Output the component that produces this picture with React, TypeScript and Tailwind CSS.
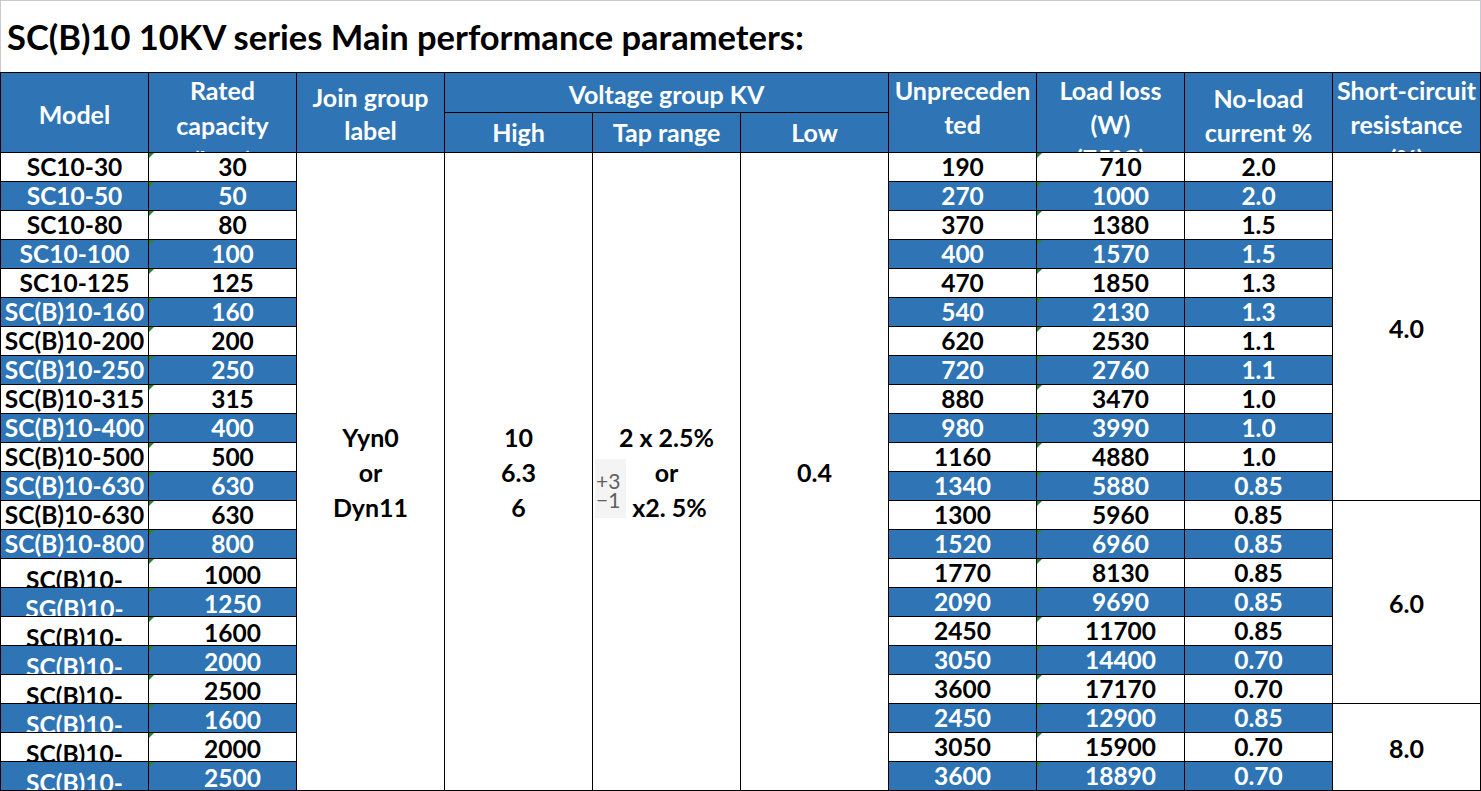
const rows: string[][] = [
  ["SC10-30", "30", "190", "710", "2.0"],
  ["SC10-50", "50", "270", "1000", "2.0"],
  ["SC10-80", "80", "370", "1380", "1.5"],
  ["SC10-100", "100", "400", "1570", "1.5"],
  ["SC10-125", "125", "470", "1850", "1.3"],
  ["SC(B)10-160", "160", "540", "2130", "1.3"],
  ["SC(B)10-200", "200", "620", "2530", "1.1"],
  ["SC(B)10-250", "250", "720", "2760", "1.1"],
  ["SC(B)10-315", "315", "880", "3470", "1.0"],
  ["SC(B)10-400", "400", "980", "3990", "1.0"],
  ["SC(B)10-500", "500", "1160", "4880", "1.0"],
  ["SC(B)10-630", "630", "1340", "5880", "0.85"],
  ["SC(B)10-630", "630", "1300", "5960", "0.85"],
  ["SC(B)10-800", "800", "1520", "6960", "0.85"],
  ["SC(B)10-", "1000", "1770", "8130", "0.85"],
  ["SG(B)10-", "1250", "2090", "9690", "0.85"],
  ["SC(B)10-", "1600", "2450", "11700", "0.85"],
  ["SC(B)10-", "2000", "3050", "14400", "0.70"],
  ["SC(B)10-", "2500", "3600", "17170", "0.70"],
  ["SC(B)10-", "1600", "2450", "12900", "0.85"],
  ["SC(B)10-", "2000", "3050", "15900", "0.70"],
  ["SC(B)10-", "2500", "3600", "18890", "0.70"],
];

const hdr =
  "bg-[#2f75b5] text-white text-[25px] flex flex-col items-center overflow-hidden whitespace-nowrap";
const cell =
  "relative flex items-center justify-center overflow-hidden whitespace-nowrap text-[24.5px] leading-[28px]";

// little green "number stored as text" marker, like Excel shows
function Flag() {
  return (
    <span className="absolute left-0 top-0 h-0 w-0 border-t-[5px] border-r-[5px] border-t-[#1f8a2a] border-r-transparent" />
  );
}

function Merged({ lines, extra = "" }: { lines: string[]; extra?: string }) {
  return (
    <div
      className={`bg-white text-black text-[25px] leading-[35px] flex flex-col items-center justify-center ${extra}`}
    >
      {lines.map((l, i) => (
        <span key={i}>{l}</span>
      ))}
    </div>
  );
}

export default function App() {
  return (
    <div className="w-[1481px] bg-white font-['Lato',sans-serif] font-bold text-black">
      {/* Title */}
      <div className="h-[72px] border-l border-t border-r border-[#c9c9d6] pl-[6px] pt-[18px] text-[34.5px] leading-[36px]">
        SC(B)10 10KV series Main performance parameters:
      </div>

      <div className="grid grid-cols-[repeat(10,147px)] grid-rows-[39px_39px_repeat(22,28px)] gap-px bg-black p-px">
        {/* Header row 1 */}
        <div className={`${hdr} row-span-2 justify-center pt-[4px]`}>Model</div>
        <div className={`${hdr} row-span-2 justify-start leading-[35px]`}>
          <span>Rated</span>
          <span>capacity</span>
          <span>(kVA)</span>
        </div>
        <div className={`${hdr} row-span-2 justify-center pt-[3px] leading-[33px]`}>
          <span>Join group</span>
          <span>label</span>
        </div>
        <div className={`${hdr} col-span-3 justify-center pt-[4px]`}>Voltage group KV</div>
        <div className={`${hdr} row-span-2 justify-start leading-[34px]`}>
          <span>Unpreceden</span>
          <span>ted</span>
        </div>
        <div className={`${hdr} row-span-2 justify-start leading-[34px]`}>
          <span>Load loss</span>
          <span>(W)</span>
          <span>(75°C)</span>
        </div>
        <div className={`${hdr} row-span-2 justify-center pt-[4px] leading-[34px]`}>
          <span>No-load</span>
          <span>current %</span>
        </div>
        <div className={`${hdr} row-span-2 justify-start leading-[34px]`}>
          <span>Short-circuit</span>
          <span>resistance</span>
          <span>(%)</span>
        </div>
        {/* Header row 2 */}
        <div className={`${hdr} justify-center`}>High</div>
        <div className={`${hdr} justify-center`}>Tap range</div>
        <div className={`${hdr} justify-center`}>Low</div>

        {/* Data */}
        {rows.map((r, i) => {
          const tone = i % 2 === 1 ? "bg-[#2f75b5] text-white" : "bg-white text-black";
          const wrapped = r[0] === "SC(B)10-" || r[0] === "SG(B)10-";
          return [
            <div key={`m${i}`} className={`${cell} ${tone}`}>
              <span className={wrapped ? "translate-y-[7px]" : ""}>{r[0]}</span>
            </div>,
            <div key={`r${i}`} className={`${cell} ${tone} pl-[20px]`}>
              <Flag />
              <span className={wrapped ? "translate-y-[2px]" : ""}>{r[1]}</span>
            </div>,
            i === 0 && (
              <Merged key="join" lines={["Yyn0", "or", "Dyn11"]} extra="row-span-22 pt-[2px]" />
            ),
            i === 0 && <Merged key="high" lines={["10", "6.3", "6"]} extra="row-span-22 pt-[2px]" />,
            i === 0 && (
              <div
                key="tap"
                className="relative row-span-22 bg-white text-black text-[25px] leading-[35px] flex flex-col items-center justify-center pt-[2px]"
              >
                <span>2 x 2.5%</span>
                <span>or</span>
                <span className="pl-[6px]">x2. 5%</span>
                <div className="absolute left-[2px] top-[calc(50%-13px)] h-[59px] w-[31px] bg-[#f4f4f4] pl-[1px] pt-[12px] text-[21px] font-normal leading-[19px] text-[#606060]">
                  <div>+3</div>
                  <div>−1</div>
                </div>
              </div>
            ),
            i === 0 && <Merged key="low" lines={["0.4"]} extra="row-span-22 pt-[2px]" />,
            <div key={`u${i}`} className={`${cell} ${tone}`}>
              {r[2]}
            </div>,
            <div key={`l${i}`} className={`${cell} ${tone} pl-[20px]`}>
              <Flag />
              {r[3]}
            </div>,
            <div key={`n${i}`} className={`${cell} ${tone}`}>
              {r[4]}
            </div>,
            i === 0 && <Merged key="s1" lines={["4.0"]} extra="row-span-12 pt-[4px]" />,
            i === 12 && <Merged key="s2" lines={["6.0"]} extra="row-span-7 pt-[3px]" />,
            i === 19 && <Merged key="s3" lines={["8.0"]} extra="row-span-3 pt-[2px]" />,
          ];
        })}
      </div>
    </div>
  );
}
